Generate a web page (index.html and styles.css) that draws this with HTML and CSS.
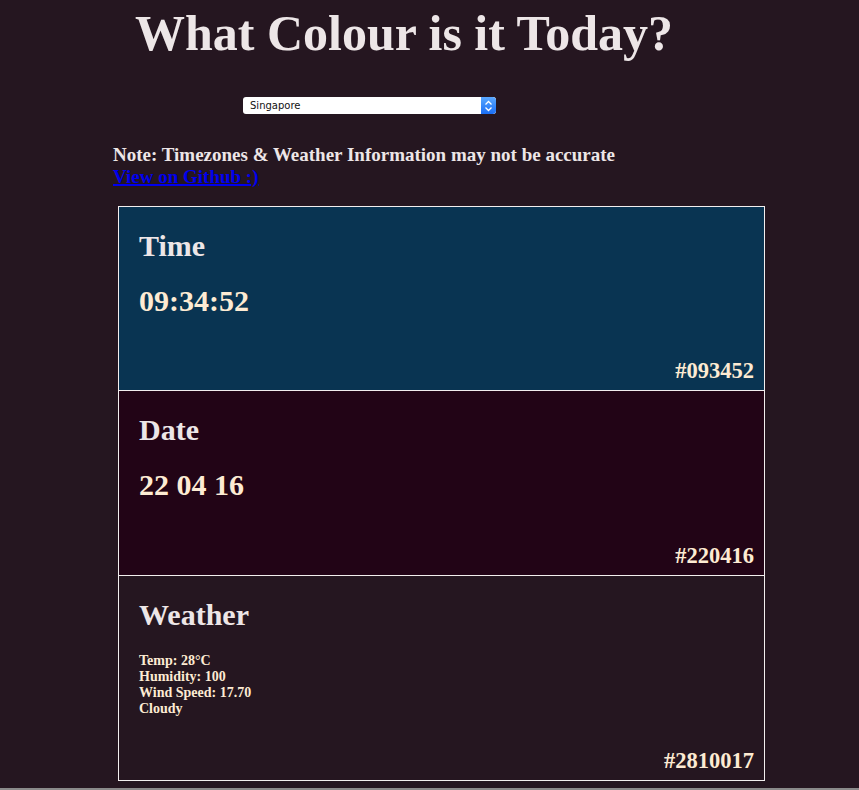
FILE: index.html
```html
<!DOCTYPE html>
<html>
<head>
<meta charset="utf-8">
<link rel="stylesheet" href="styles.css">
</head>
<body>
<div class="page">
  <h1 class="title">What Colour is it Today?</h1>
  <div class="picker">
    <div class="select">
      <span class="select-text">Singapore</span>
      <span class="select-btn">
        <svg width="9" height="12" viewBox="0 0 9 12"><path d="M1.5 4.5 L4.5 1.5 L7.5 4.5 M1.5 7.5 L4.5 10.5 L7.5 7.5" fill="none" stroke="#fff" stroke-width="1.3"/></svg>
      </span>
    </div>
  </div>
  <div class="note">
    <div>Note: Timezones &amp; Weather Information may not be accurate</div>
    <a class="gh" href="#">View on Github :)</a>
  </div>
  <div class="cards">
    <section class="card card-time">
      <h2 class="card-title">Time</h2>
      <div class="card-value">09:34:52</div>
      <div class="card-hex">#093452</div>
    </section>
    <section class="card card-date">
      <h2 class="card-title">Date</h2>
      <div class="card-value">22 04 16</div>
      <div class="card-hex">#220416</div>
    </section>
    <section class="card card-weather">
      <h2 class="card-title">Weather</h2>
      <div class="weather-info">
        <div>Temp: 28°C</div>
        <div>Humidity: 100</div>
        <div>Wind Speed: 17.70</div>
        <div>Cloudy</div>
      </div>
      <div class="card-hex">#2810017</div>
    </section>
  </div>
</div>
<div class="bottom-edge"></div>
</body>
</html>
```
FILE: styles.css
```css
html, body {
  margin: 0;
  padding: 0;
  background: #251620;
}
body {
  font-family: "Liberation Serif", "Times New Roman", serif;
  color: #ede6e7;
  min-height: 790px;
}
.page {
  padding-left: 113px;
  width: 653px;
}
.title {
  margin: 0;
  padding-top: 4px;
  font-size: 50px;
  line-height: 58px;
  font-weight: bold;
  text-align: center;
  width: 582px;
}
.picker {
  padding-top: 35px;
  padding-left: 130px;
}
.select {
  display: flex;
  width: 253px;
  height: 17px;
  background: #fff;
  border-radius: 3px;
  overflow: hidden;
  box-sizing: border-box;
}
.select-text {
  flex: 1;
  font-family: "DejaVu Sans", "Liberation Sans", sans-serif;
  font-size: 10px;
  line-height: 17px;
  color: #111;
  padding-left: 7px;
}
.select-btn {
  width: 15px;
  background: linear-gradient(#5aa8ff, #1a6ef5);
  display: flex;
  align-items: center;
  justify-content: center;
  border-radius: 0 3px 3px 0;
}
.note {
  margin-top: 30px;
  font-size: 19px;
  line-height: 22px;
  font-weight: bold;
}
.gh {
  color: #0000ee;
  text-decoration: underline;
  text-decoration-thickness: 2px;
}
.cards {
  margin-top: 18px;
  margin-left: 5px;
  width: 645px;
  border: 1px solid #f2eeee;
  border-bottom: 0;
}
.card {
  display: flex;
  flex-direction: column;
  border-bottom: 1px solid #f2eeee;
  padding: 20px 10px 6px 20px;
  box-sizing: border-box;
}
.card-time {
  background: #093452;
  height: 184px;
}
.card-date {
  background: #220416;
  height: 185px;
}
.card-weather {
  height: 205px;
}
.card-title {
  margin: 0;
  font-size: 30px;
  line-height: 38px;
  font-weight: bold;
  color: #ede6e7;
}
.card-value {
  margin-top: 18px;
  font-size: 30px;
  line-height: 36px;
  font-weight: bold;
  color: #fdebd3;
}
.weather-info {
  margin-top: 19px;
  font-size: 14px;
  line-height: 16px;
  font-weight: bold;
  color: #fdebd3;
}
.card-hex {
  margin-top: auto;
  text-align: right;
  font-size: 22.5px;
  line-height: 26px;
  font-weight: bold;
  color: #fdebd3;
}
.bottom-edge {
  position: fixed;
  left: 0;
  right: 0;
  bottom: 0;
  height: 2px;
  background: #8a8a8a;
}
```
